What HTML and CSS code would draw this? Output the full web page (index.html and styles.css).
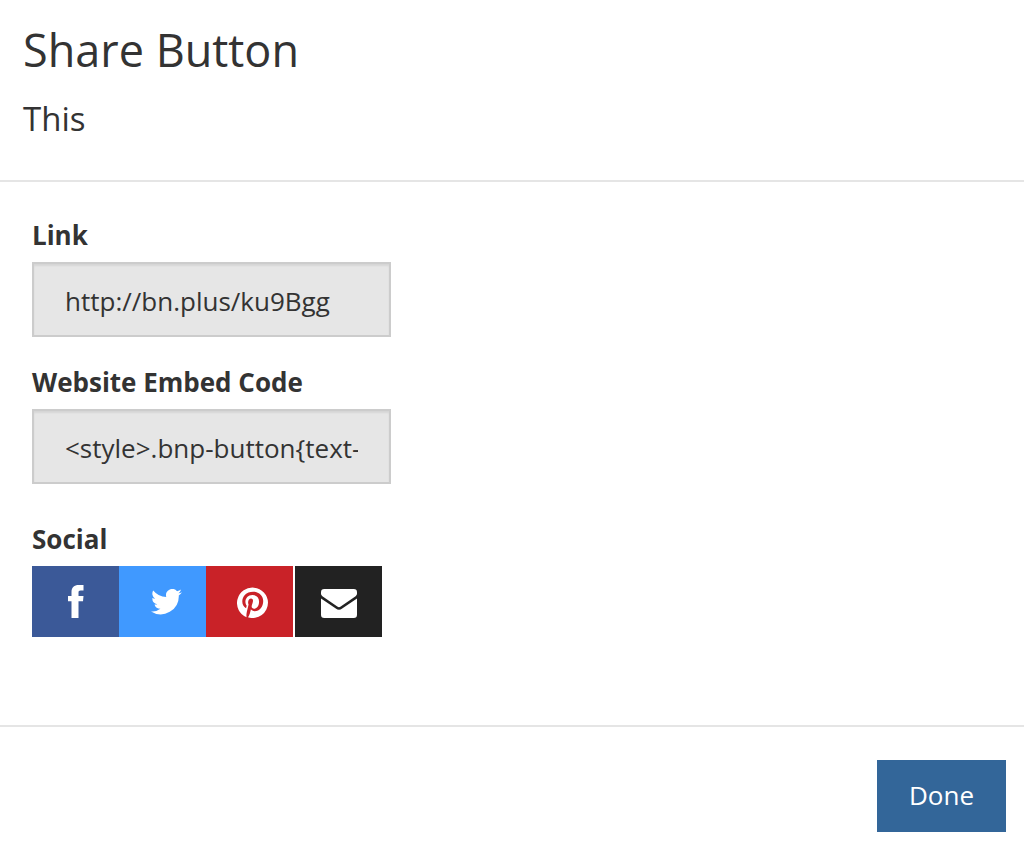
FILE: index.html
```
<!DOCTYPE html>
<html lang="en">
<head>
<meta charset="utf-8">
<title>Share Button</title>
<link rel="stylesheet" href="styles.css">
</head>
<body>
<main class="dialog">
  <header class="dialog-header">
    <h1 class="title">Share Button</h1>
    <p class="subtitle">This</p>
  </header>
  <section class="dialog-body">
    <div class="field">
      <label class="label" for="link">Link</label>
      <input class="input" id="link" type="text" readonly value="http://bn.plus/ku9Bgg">
    </div>
    <div class="field">
      <label class="label" for="embed">Website Embed Code</label>
      <input class="input" id="embed" type="text" readonly value="&lt;style&gt;.bnp-button{text-decoration:none}&lt;/style&gt;">
    </div>
    <div class="social">
      <h2 class="label">Social</h2>
      <div class="social-links">
        <a class="share facebook" href="#" aria-label="Facebook"><svg width="16" height="33" viewBox="0 0 16 33"><path d="M15.500 0v5.600h-2.700c-1.900 0-2.300.8-2.300 2.300v3h5l-.5 5.400h-4.500V33H3.500V16.300H0v-5.400h3.500V7.200C3.500 2.400 6.300 0 10.700 0z"/></svg></a>
        <a class="share twitter" href="#" aria-label="Twitter"><svg width="31" height="26" viewBox="0 0 24 20"><path d="M24 2.400a10 10 0 0 1-2.800.8A4.900 4.900 0 0 0 23.300.4a10 10 0 0 1-3.100 1.200 4.900 4.900 0 0 0-8.400 4.500A14 14 0 0 1 1.700 1a4.900 4.900 0 0 0 1.500 6.500A4.900 4.900 0 0 1 1 6.900a4.900 4.900 0 0 0 3.900 4.900 5 5 0 0 1-2.200.1 4.900 4.900 0 0 0 4.600 3.400A9.900 9.900 0 0 1 0 17.300a14 14 0 0 0 21.500-12.400A10 10 0 0 0 24 2.400z"/></svg></a>
        <a class="share pinterest" href="#" aria-label="Pinterest"><svg width="31" height="31" viewBox="0 0 24 24"><path d="M24 12a12 12 0 0 1-15.500 11.500c.5-.8 1.200-2.100 1.500-3.200l.8-3c.4.800 1.600 1.500 2.900 1.500 3.800 0 6.600-3.500 6.600-7.900 0-4.200-3.400-7.300-7.800-7.300-5.500 0-8.400 3.700-8.400 7.700 0 1.900 1 4.200 2.600 4.900.2.100.4.100.4-.1l.4-1.500-.1-.3c-.5-.6-.9-1.700-.9-2.800 0-2.700 2-5.300 5.500-5.300 3 0 5.100 2 5.100 5 0 3.300-1.700 5.600-3.900 5.600-1.200 0-2.100-1-1.800-2.200.3-1.400 1-3 1-4 0-2.700-3.800-2.300-3.800 1.200 0 1.100.4 1.800.4 1.800s-1.300 5.300-1.500 6.300c-.3 1.100-.2 2.600-.1 3.600A12 12 0 1 1 24 12z"/></svg></a>
        <a class="share email" href="#" aria-label="Email"><svg width="36" height="29" viewBox="0 0 36 29"><path d="M0 9.600l14.800 9.900c1.100.8 2.200 1.300 3.200 1.300s2.100-.5 3.200-1.300L36 9.600V25.700a3.300 3.300 0 0 1-3.300 3.300H3.300A3.300 3.300 0 0 1 0 25.700zM3.300 0h29.400A3.300 3.300 0 0 1 36 3.300v1.300c0 1.100-.5 1.900-1.400 2.600L19.700 17.500c-.6.5-1.200.7-1.700.7s-1.100-.2-1.700-.7L1.400 7.200C.5 6.500 0 5.700 0 4.600V3.300A3.300 3.300 0 0 1 3.300 0z"/></svg></a>
      </div>
    </div>
  </section>
  <footer class="dialog-footer">
    <button class="done" type="button">Done</button>
  </footer>
</main>
</body>
</html>
```
FILE: styles.css
```
* { box-sizing: border-box; }
body {
  margin: 0;
  background: #fff;
  color: #333;
  font-family: "Open Sans", "Noto Sans", sans-serif;
  font-size: 26px;
}
.dialog-header {
  padding: 18px 23px 37px;
  border-bottom: 2px solid #e5e5e5;
}
.title {
  margin: 0;
  font-size: 45px;
  font-weight: 400;
  line-height: 64px;
}
.subtitle {
  margin: 13px 0 0;
  font-size: 33px;
  line-height: 48px;
}
.dialog-body {
  padding: 35px 32px 88px;
  border-bottom: 2px solid #e5e5e5;
}
.field { margin-bottom: 27px; }
.label {
  display: block;
  margin: 0 0 9px;
  font-size: 26px;
  font-weight: 700;
  line-height: 36px;
}
.input {
  display: block;
  width: 359px;
  max-width: 100%;
  height: 75px;
  padding: 2px 31px 0;
  border: 2px solid #ccc;
  border-radius: 0;
  background: #e6e6e6;
  box-shadow: inset 0 2px 2px rgba(0, 0, 0, .07);
  color: #333;
  font: inherit;
}
.social { padding-top: 10px; }
.social-links { display: flex; }
.share {
  display: flex;
  align-items: center;
  justify-content: center;
  width: 87px;
  height: 71px;
}
.share svg { fill: #fff; }
.facebook { background: #3b5998; }
.twitter {
  padding-left: 8px;
  background: #4099ff;
}
.pinterest {
  padding: 2px 0 0 6px;
  background: #c92228;
}
.email {
  margin-left: 2px;
  padding-top: 3px;
  background: #222;
}
.dialog-footer {
  display: flex;
  justify-content: flex-end;
  padding: 33px 18px 24px;
}
.done {
  padding: 17px 32px 19px;
  border: 0;
  background: #336699;
  color: #fff;
  font: inherit;
  line-height: 36px;
}
```
